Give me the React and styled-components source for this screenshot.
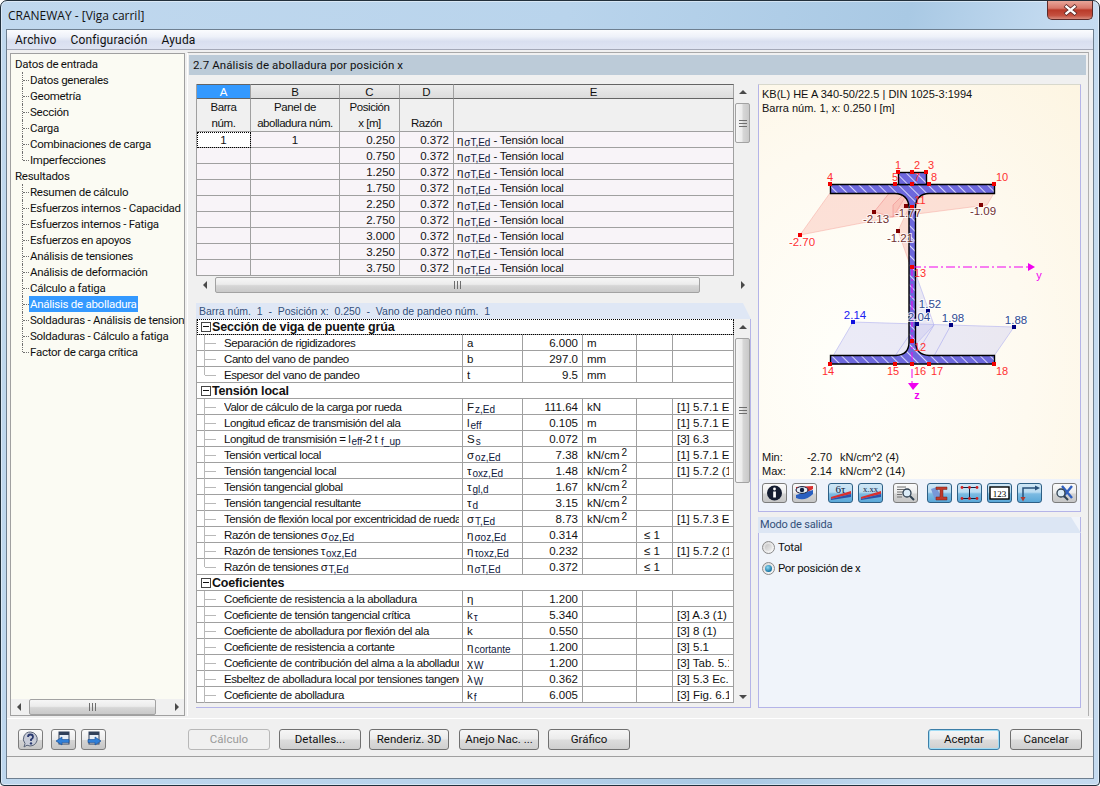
import React from "react"
import styled, { createGlobalStyle } from "styled-components"

const ui = `Roboto, "Noto Sans", sans-serif`
const arial = `"Liberation Sans", Arial, sans-serif`

const GlobalStyle = createGlobalStyle`
  html, body { margin: 0; padding: 0; background: #fff; overflow: hidden; }
  * { box-sizing: border-box; }
`

const Window = styled.div`
  width: 1100px;
  height: 786px;
  display: flex;
  flex-direction: column;
  padding: 0 5px 6px;
  border: 1px solid #22303c;
  border-radius: 7px 7px 4px 4px;
  background: linear-gradient(102deg, #c0d8ee 0%, #b9d4ec 45%, #a9c9e4 72%, #c6dcf1 85%, #c4daef 100%);
  box-shadow: inset 0 0 0 1px rgba(255, 255, 255, 0.45);
`

const TitleBar = styled.div`
  height: 28px;
  flex: none;
  display: flex;
  justify-content: space-between;
  align-items: flex-start;
`

const Title = styled.div`
  font: 12px/30px "Open Sans", ${ui};
  color: #111;
  padding-left: 2px;
`

const CloseButton = styled.div`
  width: 46px;
  height: 19px;
  margin-right: 1px;
  display: flex;
  align-items: center;
  justify-content: center;
  border: 1px solid #5b2b2a;
  border-top: none;
  border-radius: 0 0 5px 5px;
  background: linear-gradient(#e8a699 0%, #d8786a 40%, #b93a29 50%, #c4503f 80%, #d68a7c 100%);
`

const Client = styled.div`
  flex: 1;
  min-height: 0;
  display: flex;
  flex-direction: column;
  border: 1px solid #6e7f90;
  background: #f0f0f0;
`

const MenuBar = styled.div`
  height: 20px;
  flex: none;
  display: flex;
  gap: 14px;
  padding-left: 8px;
  font: 12px/20px ${ui};
  letter-spacing: 0.18px;
  color: #101010;
  background: linear-gradient(#fbfcfe 0%, #eef1f9 35%, #d9dff0 60%, #dfe4f3 100%);
  border-bottom: 1px solid #a4a8b8;
`

const Main = styled.div`
  flex: 1;
  min-height: 0;
  display: flex;
  gap: 2px;
  padding: 2px 4px 0 3px;
`

const Nav = styled.div`
  width: 175px;
  margin-top: 1px;
  flex: none;
  display: flex;
  flex-direction: column;
  border: 1px solid #a0a0a0;
  background: #fbfbf3;
`

const NavList = styled.div`
  flex: 1;
  min-height: 0;
  overflow: hidden;
  padding-top: 2px;
  font: 11.5px/16px ${ui};
  letter-spacing: -0.27px;
  color: #101010;
`

const NavGroup = styled.div`
  height: 16px;
  padding-left: 4px;
  white-space: nowrap;
`

const NavItem = styled.div`
  position: relative;
  height: 16px;
  padding-left: 18px;
  white-space: nowrap;
  &::before {
    content: "";
    position: absolute;
    left: 11px;
    top: 0;
    height: ${({ $last }) => ($last ? "8px" : "16px")};
    border-left: 1px dotted #707070;
  }
  &::after {
    content: "";
    position: absolute;
    left: 12px;
    top: 8px;
    width: 6px;
    border-top: 1px dotted #707070;
  }
`

const NavLabel = styled.span`
  display: inline-block;
  padding: 0 1px;
  height: 16px;
  ${({ $active }) => $active && "background:#3399ff;color:#fff;"}
`

const Content = styled.div`
  flex: 1;
  min-width: 0;
  display: flex;
  flex-direction: column;
  border-top: 1px solid #a8a8a8;
  border-right: 1px solid #b0b0b0;
  border-left: 1px solid #fff;
  padding: 2px 2px 0 1px;
`

const PageHeading = styled.div`
  height: 20px;
  flex: none;
  padding-left: 4px;
  background: #bccbd8;
  font: 11.5px/20px ${ui};
  letter-spacing: 0.1px;
  color: #101010;
`

const Columns = styled.div`
  flex: 1;
  min-height: 0;
  display: flex;
  gap: 7px;
  padding: 9px 0 0 7px;
`

const LeftColumn = styled.div`
  width: 555px;
  flex: none;
  display: flex;
  flex-direction: column;
`

const GridRow = styled.div`
  display: flex;
  gap: 1px;
  height: 192px;
  flex: none;
`

const GridTable = styled.table`
  width: 538px;
  table-layout: fixed;
  align-self: flex-start;
  border-collapse: separate;
  border-spacing: 0;
  border-left: 1px solid #a0a0a0;
  font: 11.5px/15px ${arial};
  color: #111;
  & th {
    font-weight: normal;
    overflow: hidden;
    white-space: nowrap;
  }
`

const ColumnHead = styled.th`
  height: 15px;
  padding: 1px 0 0;
  text-align: center;
  line-height: 12px;
  border-top: 1px solid #646464;
  border-bottom: 1px solid #646464;
  border-right: 1px solid #a0a0a0;
  color: ${({ $active }) => ($active ? "#fff" : "#111")};
  background: ${({ $active }) => ($active ? "#3399ff" : "linear-gradient(#ececec,#dcdcdc)")};
`

const SubHead = styled.th`
  height: 33px;
  padding: 0;
  text-align: center;
  vertical-align: bottom;
  line-height: 16px;
  letter-spacing: -0.45px;
  background: #f0f0f0;
  border-right: 1px solid #a0a0a0;
  border-bottom: 1px solid #a0a0a0;
`

const DataCell = styled.td`
  height: 16px;
  padding: 0 ${({ $align }) => ($align === "right" ? "4px" : "0")} 0 ${({ $align }) => ($align ? "0" : "3px")};
  background: #f8f4f8;
  border-right: 1px solid #a0a0a0;
  border-bottom: 1px solid #a0a0a0;
  text-align: ${({ $align }) => $align || "left"};
  ${({ $align }) => !$align && "letter-spacing:-0.2px;"}
  ${({ $focus }) => $focus && "outline:1px dotted #000;outline-offset:-1px;background:#fff;"}
`

const CellText = styled.div`
  height: 15px;
  padding-top: 1px;
  line-height: 15px;
  white-space: nowrap;
  overflow-x: clip;
  overflow-y: visible;
`

const ScrollTrack = styled.div`
  flex: none;
  display: flex;
  flex-direction: ${({ $vertical }) => ($vertical ? "column" : "row")};
  background: #f0f0f0;
  ${({ $vertical, $length }) => ($vertical ? `width:15px;${$length ? `height:${$length}px;` : ""}` : "height:16px;")}
`

const ScrollArrow = styled.div`
  flex: none;
  width: 15px;
  height: 15px;
  display: flex;
  align-items: center;
  justify-content: center;
`

const ScrollSpace = styled.div`
  flex: ${({ $size }) => ($size === undefined ? 1 : `0 0 ${$size}px`)};
`

const ScrollThumb = styled.div`
  flex: 0 0 ${({ $size }) => $size}px;
  display: flex;
  align-items: center;
  justify-content: center;
  border: 1px solid #a2a2a2;
  border-radius: 2px;
  background: linear-gradient(
    ${({ $vertical }) => ($vertical ? "to right" : "to bottom")},
    #f6f6f6 0%, #ececec 45%, #d6d6d6 55%, #c9c9c9 100%
  );
  &::after {
    content: "";
    width: ${({ $vertical }) => ($vertical ? "8px" : "7px")};
    height: ${({ $vertical }) => ($vertical ? "7px" : "8px")};
    background: repeating-linear-gradient(
      ${({ $vertical }) => ($vertical ? "to bottom" : "to right")},
      #6e6e6e 0, #6e6e6e 1px, transparent 1px, transparent 3px
    );
  }
`

const GridScroll = styled(ScrollTrack)`
  margin: 1px 1px 0 1px;
`

const InfoBar = styled.div`
  height: 16px;
  flex: none;
  margin-top: 10px;
  padding-left: 3px;
  background: #dfe7f5;
  clip-path: polygon(0 0, calc(100% - 8px) 0, 100% 100%, 0 100%);
  font: 10.5px/16px ${arial};
  color: #33507a;
  white-space: pre;
`

const DetailPanel = styled.div`
  height: 389px;
  flex: none;
  display: flex;
  align-items: flex-start;
  gap: 1px;
  border-right: 1px solid #b4b4e8;
  border-bottom: 1px solid #b4b4e8;
`

const DetailTable = styled.table`
  width: 538px;
  table-layout: fixed;
  border-collapse: separate;
  border-spacing: 0;
  border-left: 1px solid #a0a0a0;
  font: 11.5px/15px ${arial};
  color: #111;
  background: #fff;
`

const Cell = styled.td`
  height: 16px;
  padding: 0 4px 0 ${({ $inset }) => $inset || 4}px;
  text-align: ${({ $right }) => ($right ? "right" : "left")};
  border-right: 1px solid #a0a0a0;
  border-bottom: 1px solid #a0a0a0;
`

const TreeCell = styled(Cell)`
  position: relative;
  padding: 0 3px 0 27px;
  letter-spacing: -0.42px;
  &::before {
    content: "";
    position: absolute;
    left: 7px;
    top: 0;
    height: ${({ $last }) => ($last ? "8px" : "16px")};
    border-left: 1px solid #b8b8b8;
  }
  &::after {
    content: "";
    position: absolute;
    left: 8px;
    top: 8px;
    width: 11px;
    border-top: 1px solid #b8b8b8;
  }
`

const SectionCell = styled.td`
  height: 16px;
  padding: 0 0 0 4px;
  font: bold 12.5px/15px ${arial};
  letter-spacing: -0.17px;
  border-right: 1px solid #a0a0a0;
  border-bottom: 1px solid #a0a0a0;
  white-space: nowrap;
  ${({ $focus }) => $focus && "outline:1px dotted #000;outline-offset:-1px;"}
`

const Expander = styled.span`
  display: inline-block;
  position: relative;
  width: 10px;
  height: 10px;
  margin-right: 1px;
  border: 1px solid #444;
  vertical-align: -1px;
  &::after {
    content: "";
    position: absolute;
    left: 1px;
    right: 1px;
    top: 3px;
    border-top: 1px solid #111;
  }
`

const Sub = styled.span`
  font-size: 10px;
  position: relative;
  top: 2px;
  margin-left: 1px;
  letter-spacing: 0;
  color: #102040;
`

const Sup = styled.span`
  font-size: 10px;
  position: relative;
  top: -3px;
  margin-left: 2px;
`

const RightColumn = styled.div`
  width: 323px;
  flex: none;
  display: flex;
  flex-direction: column;
  gap: 5px;
`

const GraphicCard = styled.div`
  height: 428px;
  flex: none;
  display: flex;
  flex-direction: column;
  border: 1px solid #b4b4e8;
  border-top-color: #d8d8cc;
  background: #eef2fa;
`

const Drawing = styled.div`
  flex: 1;
  min-height: 0;
  display: flex;
  flex-direction: column;
  background: radial-gradient(ellipse at 30% 72%, #fffffb 0%, #fefaf0 55%, #fdf5e2 100%);
  font: 11px/14px ${arial};
  color: #111;
`

const Caption = styled.div`
  flex: none;
  height: 30px;
  padding: 2px 0 0 3px;
`

const DiagramSvg = styled.svg`
  display: block;
  flex: none;
  width: 321px;
  height: 335px;
`

const Readout = styled.div`
  flex: none;
  height: 14px;
  display: grid;
  grid-template-columns: 44px 26px 8px 1fr;
  padding-left: 3px;
  white-space: nowrap;
  & > :nth-child(2) {
    text-align: right;
  }
`

const IconBar = styled.div`
  flex: none;
  height: 32px;
  display: flex;
  align-items: center;
  padding: 0 0 4px 3px;
`

const IconButton = styled.div`
  width: 25px;
  height: 20px;
  flex: none;
  margin-left: ${({ $gap }) => $gap || 0}px;
  display: flex;
  align-items: center;
  justify-content: center;
  border: 1px solid ${({ $on }) => ($on ? "#2d5f85" : "#7c7c7c")};
  border-radius: 3px;
  background: ${({ $on }) =>
    $on
      ? "linear-gradient(#cfe6f5 0%, #b9dcf2 45%, #7cbbe2 55%, #5aa8d8 100%)"
      : "linear-gradient(#fbfbfb 0%, #ececec 50%, #d4d4d4 55%, #c6c6c6 100%)"};
`

const ModePanel = styled.div`
  height: 191px;
  flex: none;
  display: flex;
  flex-direction: column;
  border: 1px solid #b4b4e8;
  border-top: none;
  background: #f0f4fa;
`

const ModeTitle = styled.div`
  height: 16px;
  flex: none;
  margin: 0 -1px;
  padding-left: 2px;
  background: #dce6f4;
  clip-path: polygon(0 0, calc(100% - 10px) 0, 100% 100%, 0 100%);
  font: 11px/16px ${ui};
  letter-spacing: -0.2px;
  color: #33507a;
`

const ModeBody = styled.div`
  display: flex;
  flex-direction: column;
  gap: 8px;
  padding: 8px 0 0 3px;
  font: 11.5px/13px ${ui};
  letter-spacing: -0.33px;
  color: #111;
`

const RadioRow = styled.label`
  display: flex;
  align-items: center;
  gap: 3px;
`

const RadioDot = styled.span`
  width: 13px;
  height: 13px;
  flex: none;
  border-radius: 50%;
  border: 1px solid #8a8a8a;
  display: flex;
  align-items: center;
  justify-content: center;
  background: linear-gradient(135deg, #d8d8d8, #fafafa);
  &::after {
    content: "";
    width: 7px;
    height: 7px;
    border-radius: 50%;
    background: ${({ $checked }) =>
      $checked ? "radial-gradient(circle at 40% 35%, #8fdcf5, #0f6d9e 75%)" : "linear-gradient(135deg,#c4c4c4,#eeeeee)"};
  }
`

const Footer = styled.div`
  height: 38px;
  flex: none;
  margin-top: 2px;
  display: flex;
  align-items: flex-start;
  padding: 10px 11px 0 11px;
  border-top: 1px solid #fff;
`

const PushButton = styled.div`
  width: ${({ $w }) => $w || 82}px;
  height: 21px;
  flex: none;
  margin-left: ${({ $gap }) => $gap ?? 9}px;
  display: flex;
  align-items: center;
  justify-content: center;
  border: 1px solid ${({ $disabled, $default }) => ($disabled ? "#b8b8b8" : $default ? "#3d7fa8" : "#707070")};
  border-radius: 3px;
  font: 11.5px/1 ${ui};
  color: ${({ $disabled }) => ($disabled ? "#9a9a9a" : "#111")};
  background: ${({ $disabled }) =>
    $disabled ? "#f0f0f0" : "linear-gradient(#f6f6f6 0%, #ebebeb 48%, #dcdcdc 52%, #cfcfcf 100%)"};
  ${({ $default }) => $default && "box-shadow: inset 0 0 0 1px #9fdcf5;"}
`

const SmallIconButton = styled(IconButton)`
  height: 21px;
`

const FooterEnd = styled.div`
  margin-left: auto;
  display: flex;
`

const StatusBar = styled.div`
  height: 22px;
  flex: none;
  border-top: 1px solid #a0a0a0;
  background: #f0f0f0;
`

const NodeText = styled.text`
  font: 11px ${arial};
  fill: ${({ $dark }) => $dark || "#ff3030"};
  text-anchor: middle;
`

const StressText = styled.text`
  font: 11.5px ${arial};
  fill: ${({ $fill }) => $fill};
  text-anchor: middle;
  paint-order: stroke;
  stroke: rgba(255, 255, 255, 0.75);
  stroke-width: 2px;
`

const ArrowGlyph = ({ dir }) => {
  const pts = {
    up: "0,5 4,1 8,5",
    down: "0,1 4,5 8,1",
    left: "5,0 1,4 5,8",
    right: "1,0 5,4 1,8",
  }[dir]
  const box = dir === "up" || dir === "down" ? "0 0 8 6" : "0 0 6 8"
  const w = dir === "up" || dir === "down" ? 8 : 6
  const h = dir === "up" || dir === "down" ? 6 : 8
  return (
    <svg width={w} height={h} viewBox={box}>
      <polygon points={pts} fill="#4a4a4a" />
    </svg>
  )
}

const Scrollbar = ({ as: Track = ScrollTrack, vertical, before, thumb, length, noEnd }) => (
  <Track $vertical={vertical} $length={length}>
    <ScrollArrow>
      <ArrowGlyph dir={vertical ? "up" : "left"} />
    </ScrollArrow>
    <ScrollSpace $size={before} />
    <ScrollThumb $vertical={vertical} $size={thumb} />
    <ScrollSpace />
    {!noEnd && (
      <ScrollArrow>
        <ArrowGlyph dir={vertical ? "down" : "right"} />
      </ScrollArrow>
    )}
  </Track>
)

const navInput = ["Datos generales", "Geometría", "Sección", "Carga", "Combinaciones de carga", "Imperfecciones"]
const navResults = [
  "Resumen de cálculo",
  "Esfuerzos internos - Capacidad",
  "Esfuerzos internos - Fatiga",
  "Esfuerzos en apoyos",
  "Análisis de tensiones",
  "Análisis de deformación",
  "Cálculo a fatiga",
  "Análisis de abolladura",
  "Soldaduras - Análisis de tensiones",
  "Soldaduras - Cálculo a fatiga",
  "Factor de carga crítica",
]

const positions = ["0.250", "0.750", "1.250", "1.750", "2.250", "2.750", "3.000", "3.250", "3.750"]

const sy = (base, sub) => (
  <>
    {base}
    <Sub>{sub}</Sub>
  </>
)

const detail = [
  { section: "Sección de viga de puente grúa", focus: true },
  { label: "Separación de rigidizadores", sym: "a", val: "6.000", unit: "m" },
  { label: "Canto del vano de pandeo", sym: "b", val: "297.0", unit: "mm" },
  { label: "Espesor del vano de pandeo", sym: "t", val: "9.5", unit: "mm", last: true },
  { section: "Tensión local" },
  { label: "Valor de cálculo de la carga por rueda", sym: sy("F", "z,Ed"), val: "111.64", unit: "kN", ref: "[1] 5.7.1 Ec. (5.1)" },
  { label: "Longitud eficaz de transmisión del ala", sym: sy("l", "eff"), val: "0.105", unit: "m", ref: "[1] 5.7.1 Ec. (5.2)" },
  { label: <>Longitud de transmisión = l<Sub>eff</Sub>-2 t<Sub> f_up</Sub></>, sym: sy("S", "s"), val: "0.072", unit: "m", ref: "[3] 6.3" },
  { label: "Tensión vertical local", sym: sy("σ", "oz,Ed"), val: "7.38", unit: "kN/cm2", ref: "[1] 5.7.1 Ec. (5.3)" },
  { label: "Tensión tangencial local", sym: sy("τ", "oxz,Ed"), val: "1.48", unit: "kN/cm2", ref: "[1] 5.7.2 (1)" },
  { label: "Tensión tangencial global", sym: sy("τ", "gl,d"), val: "1.67", unit: "kN/cm2" },
  { label: "Tensión tangencial resultante", sym: sy("τ", "d"), val: "3.15", unit: "kN/cm2" },
  { label: "Tensión de flexión local por excentricidad de rueda", sym: sy("σ", "T,Ed"), val: "8.73", unit: "kN/cm2", ref: "[1] 5.7.3 Ec. (5.9)" },
  { label: <>Razón de tensiones σ<Sub>oz,Ed</Sub></>, sym: sy("η", "σoz,Ed"), val: "0.314", lim: "≤ 1" },
  { label: <>Razón de tensiones τ<Sub>oxz,Ed</Sub></>, sym: sy("η", "τoxz,Ed"), val: "0.232", lim: "≤ 1", ref: "[1] 5.7.2 (1)" },
  { label: <>Razón de tensiones σ<Sub>T,Ed</Sub></>, sym: sy("η", "σT,Ed"), val: "0.372", lim: "≤ 1", last: true },
  { section: "Coeficientes" },
  { label: "Coeficiente de resistencia a la abolladura", sym: "η", val: "1.200" },
  { label: "Coeficiente de tensión tangencial crítica", sym: sy("k", "τ"), val: "5.340", ref: "[3] A.3 (1) Ec." },
  { label: "Coeficiente de abolladura por flexión del ala", sym: "k", val: "0.550", ref: "[3] 8 (1)" },
  { label: "Coeficiente de resistencia a cortante", sym: sy("η", "cortante"), val: "1.200", ref: "[3] 5.1" },
  { label: "Coeficiente de contribución del alma a la abolladura", sym: sy("χ", "W"), val: "1.200", ref: "[3] Tab. 5.1" },
  { label: "Esbeltez de abolladura local por tensiones tangenciales", sym: sy("λ", "W"), val: "0.362", ref: "[3] 5.3 Ec. (5.3)" },
  { label: "Coeficiente de abolladura", sym: sy("k", "f"), val: "6.005", ref: "[3] Fig. 6.1" },
]

const Unit = ({ text }) =>
  text && text.endsWith("2") ? (
    <>
      {text.slice(0, -1)}
      <Sup>2</Sup>
    </>
  ) : (
    text || null
  )

const redNodes = [
  [898, 172], [912, 172], [926, 172], [830, 184], [895, 184], [912, 184], [929, 184], [994, 184],
  [912, 207], [912, 267], [912, 341], [830, 364], [895, 364], [912, 364], [929, 364], [994, 364], [800, 235],
]
const darkNodes = [[874, 212], [906, 206], [981, 205], [898, 231]]
const blueNodes = [[853, 322], [928, 311], [917, 324], [951, 325], [1014, 327]]

const nodeLabels = [
  ["1", 898, 169], ["2", 917, 169], ["3", 931, 169], ["4", 830, 181], ["5", 895, 181], ["7", 917, 181],
  ["8", 934, 181], ["10", 1002, 181], ["11", 920, 204], ["13", 920, 277], ["12", 920, 351],
  ["14", 828, 375], ["15", 893, 375], ["16", 920, 375], ["17", 937, 375], ["18", 1002, 375],
]

const Beam = () => (
  <DiagramSvg viewBox="759 115 321 335">
    <defs>
      <pattern id="hatch" width="7" height="7" patternUnits="userSpaceOnUse" patternTransform="rotate(-45)">
        <rect width="7" height="7" fill="#6d68dc" />
        <rect width="1" height="7" fill="#d8d8f8" />
      </pattern>
    </defs>
    <polygon points="830,193 800,235 893,217 987,205 994,193" fill="#f9b9ac" fillOpacity="0.4" stroke="#f5a8a0" strokeOpacity="0.5" />
    <polygon points="895,186 874,212 893,217 912,186" fill="#f9a9a0" fillOpacity="0.3" stroke="#f09090" strokeOpacity="0.6" />
    <polygon points="912,186 893,205 893,217 929,186" fill="#f9a9a0" fillOpacity="0.3" stroke="#f09090" strokeOpacity="0.6" />
    <polygon points="909,207 898,231 909,262" fill="#f9b9ac" fillOpacity="0.45" stroke="#f5a8a0" strokeOpacity="0.5" />
    <polygon points="833,356 853,322 1014,327 994,356" fill="#b8b8f0" fillOpacity="0.28" stroke="#b0b0f0" strokeOpacity="0.6" />
    <polygon points="915,272 934,325 915,345" fill="#b8b8f0" fillOpacity="0.3" stroke="#b0b0f0" strokeOpacity="0.6" />
    <line x1="895" y1="356" x2="917" y2="324" stroke="#b0b0f0" strokeOpacity="0.7" />
    <line x1="915" y1="356" x2="934" y2="325" stroke="#b0b0f0" strokeOpacity="0.7" />
    <line x1="934" y1="356" x2="951" y2="325" stroke="#b0b0f0" strokeOpacity="0.7" />
    <path
      d="M830.5,184.5 H994.5 V193.5 H929 Q916,194 915.5,207 V342 Q916,355 929,355.5 H994.5 V364 H830.5 V355.5 H896 Q909,355 909,342 V207 Q908,194 895,193.5 H830.5 Z"
      fill="url(#hatch)"
      stroke="#000"
      strokeWidth="1.4"
    />
    <rect x="898.5" y="172.5" width="28" height="12" fill="url(#hatch)" stroke="#000" strokeWidth="1.4" />
    <line x1="912" y1="267" x2="1029" y2="267" stroke="#f000f0" strokeDasharray="9 3 2 3" />
    <polygon points="1028,263 1035,267 1028,271" fill="#f000f0" />
    <line x1="912" y1="267" x2="912" y2="384" stroke="#f000f0" strokeDasharray="9 3 2 3" />
    <polygon points="908,383 919,383 913,390" fill="#f000f0" />
    <NodeText x="1039" y="279" $dark="#f000f0">y</NodeText>
    <NodeText x="917" y="399" $dark="#f000f0" style={{ fontWeight: "bold" }}>z</NodeText>
    {redNodes.map(([x, y]) => (
      <rect key={`r${x}-${y}`} x={x - 2} y={y - 2} width="4" height="4" fill="#f00000" />
    ))}
    {darkNodes.map(([x, y]) => (
      <rect key={`d${x}-${y}`} x={x - 2} y={y - 2} width="4" height="4" fill="#800000" />
    ))}
    {blueNodes.map(([x, y]) => (
      <rect key={`b${x}-${y}`} x={x - 2} y={y - 2} width="4" height="4" fill={x === 853 ? "#1010e0" : "#000080"} />
    ))}
    {nodeLabels.map(([t, x, y]) => (
      <NodeText key={t} x={x} y={y}>{t}</NodeText>
    ))}
    <StressText x="802" y="246" $fill="#ff3030">-2.70</StressText>
    <StressText x="876" y="223" $fill="#703030">-2.13</StressText>
    <StressText x="908" y="217" $fill="#703030">-1.77</StressText>
    <StressText x="983" y="215" $fill="#703030">-1.09</StressText>
    <StressText x="900" y="242" $fill="#703030">-1.21</StressText>
    <StressText x="855" y="319" $fill="#2020f0">2.14</StressText>
    <StressText x="930" y="308" $fill="#304a90">1.52</StressText>
    <StressText x="919" y="321" $fill="#304a90">2.04</StressText>
    <StressText x="953" y="322" $fill="#304a90">1.98</StressText>
    <StressText x="1016" y="324" $fill="#304a90">1.88</StressText>
  </DiagramSvg>
)

const Ramp = () => (
  <>
    <polygon points="2,13 22,7 22,10 2,15" fill="#d83030" />
    <polygon points="2,15 22,10 22,13 2,16" fill="#3050a8" />
  </>
)

const IconSvg = ({ children, w = 23, h = 18 }) => (
  <svg width={w} height={h} viewBox={`0 0 ${w} ${h}`}>
    {children}
  </svg>
)

const Magnifier = ({ x, y }) => (
  <>
    <circle cx={x} cy={y} r="4" fill="#dcecf8" stroke="#304050" strokeWidth="1.3" />
    <line x1={x + 3} y1={y + 3} x2={x + 7} y2={y + 7} stroke="#304050" strokeWidth="2" />
  </>
)

const toolIcons = [
  { gap: 0, on: false, icon: (
    <IconSvg>
      <circle cx="11.5" cy="9" r="7.5" fill="#141c30" />
      <circle cx="11.5" cy="5" r="1.4" fill="#fff" />
      <rect x="10.2" y="7.5" width="2.7" height="6" fill="#fff" />
    </IconSvg>
  ) },
  { gap: 5, on: false, icon: (
    <IconSvg>
      <path d="M3,3 L20,2 L20,5 L11,10 L3,8 Z" fill="#d83030" />
      <path d="M3,11 L20,6 L20,10 Q12,18 3,14 Z" fill="#2a5fc0" />
      <ellipse cx="9" cy="6" rx="6" ry="3.4" fill="#e8f0f8" stroke="#102040" />
      <circle cx="9" cy="6" r="2.2" fill="#102040" />
    </IconSvg>
  ) },
  { gap: 11, on: true, icon: (
    <IconSvg>
      <text x="11.5" y="9" textAnchor="middle" fontFamily="Liberation Serif, serif" fontSize="11" fill="#102040">6τ</text>
      <Ramp />
    </IconSvg>
  ) },
  { gap: 5, on: true, icon: (
    <IconSvg>
      <text x="11.5" y="8" textAnchor="middle" fontFamily="Liberation Serif, serif" fontSize="8.5" fill="#102040">x.xx</text>
      <Ramp />
    </IconSvg>
  ) },
  { gap: 10, on: false, icon: (
    <IconSvg>
      <path d="M3,3 H12 M3,5.5 H12 M3,8 H9 M3,10.5 H8 M3,13 H8" stroke="#707070" />
      <Magnifier x={13} y={9} />
    </IconSvg>
  ) },
  { gap: 9, on: true, icon: (
    <IconSvg>
      <polygon points="3,5 9,3 13,14 7,16" fill="#7898d8" />
      <path d="M8,3 H19 V5.5 H15 V13 H19 V16 H8 V13 H12 V5.5 H8 Z" fill="#c03a28" stroke="#702018" strokeWidth="0.5" />
    </IconSvg>
  ) },
  { gap: 5, on: true, icon: (
    <IconSvg>
      <path d="M4,3.5 H19 M4,14.5 H19 M11.5,3.5 V14.5" stroke="#102040" />
      {[4, 11.5, 19].flatMap(x => [3.5, 14.5].map(y => (
        <circle key={`${x}-${y}`} cx={x} cy={y} r="1.4" fill="#d02020" />
      )))}
    </IconSvg>
  ) },
  { gap: 5, on: true, icon: (
    <IconSvg>
      <rect x="2" y="3" width="19" height="12" fill="#fff" stroke="#000" strokeWidth="1.4" />
      <text x="11.5" y="12.5" textAnchor="middle" fontFamily="Liberation Serif, serif" fontSize="9" fill="#000">123</text>
    </IconSvg>
  ) },
  { gap: 5, on: true, icon: (
    <IconSvg>
      <path d="M5,14 V4 H18" fill="none" stroke="#28507a" strokeWidth="1.5" />
      <polygon points="17,1.5 22,4 17,6.5" fill="#28507a" />
      <polygon points="2.5,13 7.5,13 5,17.5" fill="#b03a30" />
    </IconSvg>
  ) },
  { gap: 10, on: false, icon: (
    <IconSvg>
      <path d="M9,2 L19,14 M19,2 L10,13" stroke="#3060c0" strokeWidth="2.4" />
      <Magnifier x={8} y={9} />
    </IconSvg>
  ) },
]

const WindowArrow = ({ flip }) => (
  <IconSvg w={19} h={17}>
    <rect x="5" y="1" width="10" height="12" fill="#e8eef6" stroke="#30405a" />
    <rect x="5" y="1" width="10" height="3" fill="#30405a" />
    <g transform={flip ? "translate(19 0) scale(-1 1)" : undefined}>
      <polygon points="2,10 8,6 8,8.5 15,8.5 15,11.5 8,11.5 8,14" fill="#2f7fd8" stroke="#154a90" strokeWidth="0.6" />
    </g>
  </IconSvg>
)

const HelpIcon = () => (
  <IconSvg w={19} h={17}>
    <path d="M9.5,1 A7,7 0 1 1 6,14.2 L3,16 L4,12.5 A7,7 0 0 1 9.5,1 Z" fill="#c8ccd8" stroke="#5a6478" />
    <path d="M7,6 Q7,3.5 9.5,3.5 Q12,3.5 12,6 Q12,7.5 10,8.5 V10" fill="none" stroke="#2a3a70" strokeWidth="1.8" />
    <circle cx="10" cy="12.4" r="1.2" fill="#2a3a70" />
  </IconSvg>
)

export default function App() {
  return (
    <Window>
      <GlobalStyle />
      <TitleBar>
        <Title>CRANEWAY - [Viga carril]</Title>
        <CloseButton>
          <svg width="15" height="12" viewBox="0 0 15 12">
            <path d="M2,1.5 L13,10.5 M13,1.5 L2,10.5" stroke="#5a2a28" strokeWidth="4" />
            <path d="M2.5,1.8 L12.5,10.2 M12.5,1.8 L2.5,10.2" stroke="#fff" strokeWidth="2.4" />
          </svg>
        </CloseButton>
      </TitleBar>
      <Client>
        <MenuBar>
          <span>Archivo</span>
          <span>Configuración</span>
          <span>Ayuda</span>
        </MenuBar>
        <Main>
          <Nav>
            <NavList>
              <NavGroup>Datos de entrada</NavGroup>
              {navInput.map((t, i) => (
                <NavItem key={t} $last={i === navInput.length - 1}>
                  <NavLabel>{t}</NavLabel>
                </NavItem>
              ))}
              <NavGroup>Resultados</NavGroup>
              {navResults.map((t, i) => (
                <NavItem key={t} $last={i === navResults.length - 1}>
                  <NavLabel $active={t === "Análisis de abolladura"}>{t}</NavLabel>
                </NavItem>
              ))}
            </NavList>
            <Scrollbar before={3} thumb={127} />
          </Nav>
          <Content>
            <PageHeading>2.7 Análisis de abolladura por posición x</PageHeading>
            <Columns>
              <LeftColumn>
                <GridRow>
                  <GridTable>
                    <colgroup>
                      <col style={{ width: 54 }} />
                      <col style={{ width: 89 }} />
                      <col style={{ width: 60 }} />
                      <col style={{ width: 54 }} />
                      <col style={{ width: 280 }} />
                    </colgroup>
                    <thead>
                      <tr>
                        <ColumnHead $active>A</ColumnHead>
                        <ColumnHead>B</ColumnHead>
                        <ColumnHead>C</ColumnHead>
                        <ColumnHead>D</ColumnHead>
                        <ColumnHead>E</ColumnHead>
                      </tr>
                      <tr>
                        <SubHead>Barra<br />núm.</SubHead>
                        <SubHead>Panel de<br />abolladura núm.</SubHead>
                        <SubHead>Posición<br />x [m]</SubHead>
                        <SubHead>Razón</SubHead>
                        <SubHead />
                      </tr>
                    </thead>
                    <tbody>
                      {positions.map((p, i) => (
                        <tr key={p}>
                          <DataCell $align="center" $focus={i === 0}><CellText>{i === 0 ? "1" : ""}</CellText></DataCell>
                          <DataCell $align="center"><CellText>{i === 0 ? "1" : ""}</CellText></DataCell>
                          <DataCell $align="right"><CellText>{p}</CellText></DataCell>
                          <DataCell $align="right"><CellText>0.372</CellText></DataCell>
                          <DataCell><CellText>{sy("η", "σT,Ed")} - Tensión local</CellText></DataCell>
                        </tr>
                      ))}
                    </tbody>
                  </GridTable>
                  <Scrollbar vertical before={4} thumb={40} noEnd />
                </GridRow>
                <Scrollbar as={GridScroll} before={3} thumb={485} />
                <InfoBar>{"Barra núm.  1  -  Posición x:  0.250  -  Vano de pandeo núm.  1"}</InfoBar>
                <DetailPanel>
                  <DetailTable>
                    <colgroup>
                      <col style={{ width: 266 }} />
                      <col style={{ width: 60 }} />
                      <col style={{ width: 60 }} />
                      <col style={{ width: 54 }} />
                      <col style={{ width: 36 }} />
                      <col style={{ width: 61 }} />
                    </colgroup>
                    <tbody>
                      {detail.map((r, i) =>
                        r.section ? (
                          <tr key={i}>
                            <SectionCell colSpan={6} $focus={r.focus}>
                              <CellText>
                                <Expander />
                                {r.section}
                              </CellText>
                            </SectionCell>
                          </tr>
                        ) : (
                          <tr key={i}>
                            <TreeCell $last={r.last}><CellText>{r.label}</CellText></TreeCell>
                            <Cell><CellText>{r.sym}</CellText></Cell>
                            <Cell $right><CellText>{r.val}</CellText></Cell>
                            <Cell><CellText><Unit text={r.unit} /></CellText></Cell>
                            <Cell $inset={7}><CellText>{r.lim}</CellText></Cell>
                            <Cell><CellText>{r.ref}</CellText></Cell>
                          </tr>
                        )
                      )}
                    </tbody>
                  </DetailTable>
                  <Scrollbar vertical before={4} thumb={145} length={385} />
                </DetailPanel>
              </LeftColumn>
              <RightColumn>
                <GraphicCard>
                  <Drawing>
                    <Caption>
                      KB(L) HE A 340-50/22.5 | DIN 1025-3:1994
                      <br />
                      Barra núm. 1, x: 0.250 l [m]
                    </Caption>
                    <Beam />
                    <Readout>
                      <span>Min:</span>
                      <span>-2.70</span>
                      <span />
                      <span>kN/cm^2 (4)</span>
                    </Readout>
                    <Readout>
                      <span>Max:</span>
                      <span>2.14</span>
                      <span />
                      <span>kN/cm^2 (14)</span>
                    </Readout>
                  </Drawing>
                  <IconBar>
                    {toolIcons.map((b, i) => (
                      <IconButton key={i} $gap={b.gap} $on={b.on}>
                        {b.icon}
                      </IconButton>
                    ))}
                  </IconBar>
                </GraphicCard>
                <ModePanel>
                  <ModeTitle>Modo de salida</ModeTitle>
                  <ModeBody>
                    <RadioRow>
                      <RadioDot />
                      Total
                    </RadioRow>
                    <RadioRow>
                      <RadioDot $checked />
                      Por posición de x
                    </RadioRow>
                  </ModeBody>
                </ModePanel>
              </RightColumn>
            </Columns>
          </Content>
        </Main>
        <Footer>
          <SmallIconButton>
            <HelpIcon />
          </SmallIconButton>
          <SmallIconButton $gap={8}>
            <WindowArrow />
          </SmallIconButton>
          <SmallIconButton $gap={5}>
            <WindowArrow flip />
          </SmallIconButton>
          <PushButton $disabled $gap={82}>Cálculo</PushButton>
          <PushButton>Detalles...</PushButton>
          <PushButton $w={80} $gap={8}>Renderiz. 3D</PushButton>
          <PushButton $w={80} $gap={10}>Anejo Nac. ...</PushButton>
          <PushButton>Gráfico</PushButton>
          <FooterEnd>
            <PushButton $w={72} $default>Aceptar</PushButton>
            <PushButton $w={72} $gap={10}>Cancelar</PushButton>
          </FooterEnd>
        </Footer>
        <StatusBar />
      </Client>
    </Window>
  )
}
